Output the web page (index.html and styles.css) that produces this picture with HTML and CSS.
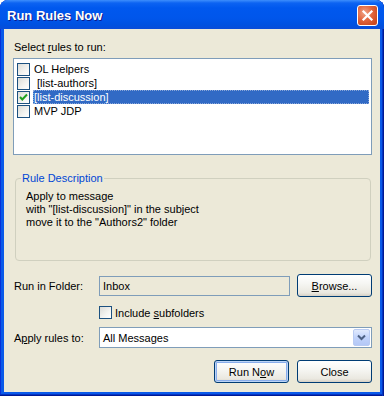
FILE: index.html
```html
<!DOCTYPE html>
<html lang="en">
<head>
  <meta charset="UTF-8" />
  <title>Run Rules Now</title>
  <link rel="stylesheet" href="styles.css">
</head>
<body>

  <div class="window">
    <div class="titlebar">
      <span class="title">Run Rules Now</span>
      <div class="close-btn">
        <svg width="13" height="13" viewBox="0 0 13 13">
          <path d="M2.5 2.5 L10.5 10.5 M10.5 2.5 L2.5 10.5" stroke="#fff" stroke-width="2.2" stroke-linecap="square" />
        </svg>
      </div>
    </div>

    <div class="client">
      <div class="prompt">Select <u>r</u>ules to run:</div>

      <div class="rule-list">
        <div class="rule-row"><span class="check"></span><span class="rule-name">OL Helpers</span></div>
        <div class="rule-row"><span class="check"></span><span class="rule-name">&nbsp;[list-authors]</span></div>
        <div class="rule-row selected">
          <span class="check">
            <svg width="11" height="11" viewBox="0 0 11 11"><path d="M2 5 L4.3 7.5 L9 2.5" fill="none" stroke="#21a121" stroke-width="2" /></svg>
          </span>
          <span class="rule-name">[list-discussion]</span>
        </div>
        <div class="rule-row"><span class="check"></span><span class="rule-name">MVP JDP</span></div>
      </div>

      <fieldset class="rule-desc">
        <legend>Rule Description</legend>
        <p>Apply to message</p>
        <p>with "[list-discussion]" in the subject</p>
        <p>move it to the "Authors2" folder</p>
      </fieldset>

      <div class="form-row folder-row">
        <span class="field-label">Run in Folder:</span>
        <div class="field readonly">Inbox</div>
        <button class="xp-btn"><u>B</u>rowse...</button>
      </div>

      <div class="include-row">
        <span class="check"></span>
        <span>Include <u>s</u>ubfolders</span>
      </div>

      <div class="form-row apply-row">
        <span class="field-label">A<u>p</u>ply rules to:</span>
        <div class="field combo">
          <span>All Messages</span>
          <span class="combo-arrow">
            <svg width="9" height="7" viewBox="0 0 9 7"><path d="M1 1.5 L4.5 5 L8 1.5" fill="none" stroke="#4d6185" stroke-width="2" /></svg>
          </span>
        </div>
      </div>

      <div class="actions">
        <button class="xp-btn default">Run N<u>o</u>w</button>
        <button class="xp-btn">Close</button>
      </div>
    </div>
  </div>

</body>
</html>
```

FILE: styles.css
```css
* { margin: 0; padding: 0; box-sizing: border-box; }
body { background: #fff; font-family: "Liberation Sans", Arial, sans-serif; font-size: 11px; color: #000; }

.window {
  width: 384px;
  height: 396px;
  background: #0a5ae9;
  border-radius: 8px 8px 0 0;
  display: flex;
  flex-direction: column;
  box-shadow: inset -1px 0 #001a94, inset -2px 0 #0434c2, inset 0 -1px #001a94, inset 0 -2px #0434c2, inset 1px 0 #0831d9;
}

.titlebar {
  height: 29px;
  border-radius: 8px 8px 0 0;
  background: linear-gradient(to bottom, #3d8efc 0, #0c63f2 3px, #0058ee 8px, #0056eb 18px, #0051e0 25px, #0a4cd8 29px);
  display: flex;
  align-items: center;
  justify-content: space-between;
  padding: 2px 6px 0 7px;
}
.title {
  color: #fff;
  font-weight: bold;
  font-size: 13px;
  text-shadow: 1px 1px #0f1b89;
}
.close-btn {
  width: 21px;
  height: 21px;
  border: 1px solid #fff;
  border-radius: 3px;
  background: radial-gradient(circle at 35% 35%, #f0a487 0, #e1653d 45%, #cc4a20 80%);
  display: flex;
  align-items: center;
  justify-content: center;
}

.client {
  flex: 1;
  margin: 0 4px 4px 4px;
  background: #ece9d8;
  padding: 0 8px 0 9px;
  display: flex;
  flex-direction: column;
}

.prompt { margin-top: 12px; line-height: 13px; padding-left: 1px; }

.rule-list {
  margin-top: 4px;
  height: 97px;
  background: #fff;
  border: 1px solid #7f9db9;
  padding: 3px 2px 0 3px;
}
.rule-row { display: flex; align-items: center; height: 14px; }
.rule-row .check { margin-right: 3px; }
.rule-name { flex: 1; line-height: 14px; padding-left: 1px; }
.rule-row.selected .rule-name {
  background: #316ac5;
  color: #fff;
  outline: 1px dotted #8aa6d8;
  outline-offset: -1px;
}

.check {
  width: 13px;
  height: 13px;
  flex: none;
  border: 1px solid #1c5180;
  background: linear-gradient(135deg, #dcdcd7 0, #f4f4f1 60%, #fff 100%);
  display: flex;
  align-items: center;
  justify-content: center;
}

.rule-desc {
  margin: 17px 1px 0 2px;
  height: 89px;
  border: 1px solid #d0d0bf;
  border-radius: 4px;
  padding: 5px 8px 0 10px;
}
.rule-desc legend {
  color: #0046d5;
  line-height: 13px;
  padding: 0 1px;
  margin-left: -5px;
}
.rule-desc p { line-height: 13px; }

.form-row { display: flex; align-items: center; }
.field-label { width: 86px; padding-left: 1px; flex: none; }
.field {
  height: 20px;
  border: 1px solid #7f9db9;
  display: flex;
  align-items: center;
  padding-left: 3px;
}
.folder-row { margin-top: 13px; height: 23px; gap: 7px; }
.folder-row .field-label { margin-right: -7px; }
.field.readonly { flex: 1; background: #ece9d8; }

.xp-btn {
  width: 75px;
  height: 23px;
  font: inherit;
  color: #000;
  border: 1px solid #003c74;
  border-radius: 3px;
  background: linear-gradient(to bottom, #fff 0, #f6f6f3 40%, #eae8e0 85%, #d6d0c5 100%);
}
.xp-btn.default {
  box-shadow: inset 0 0 0 1px #bcd4f6, inset 0 0 0 2px #89adeb;
}

.include-row {
  margin: 9px 0 0 86px;
  display: flex;
  align-items: center;
  gap: 3px;
  height: 13px;
}

.apply-row { margin-top: 8px; height: 21px; }
.field.combo {
  flex: 1;
  height: 21px;
  background: #fff;
  justify-content: space-between;
  padding-right: 1px;
}
.combo-arrow {
  width: 17px;
  height: 17px;
  border-radius: 2px;
  background: linear-gradient(to bottom, #e1eafe 0, #c1d3fb 50%, #b4c8f6 100%);
  border: 1px solid #b9cbf3;
  display: flex;
  align-items: center;
  justify-content: center;
}

.actions {
  margin-top: 12px;
  display: flex;
  justify-content: flex-end;
  gap: 8px;
}
```
